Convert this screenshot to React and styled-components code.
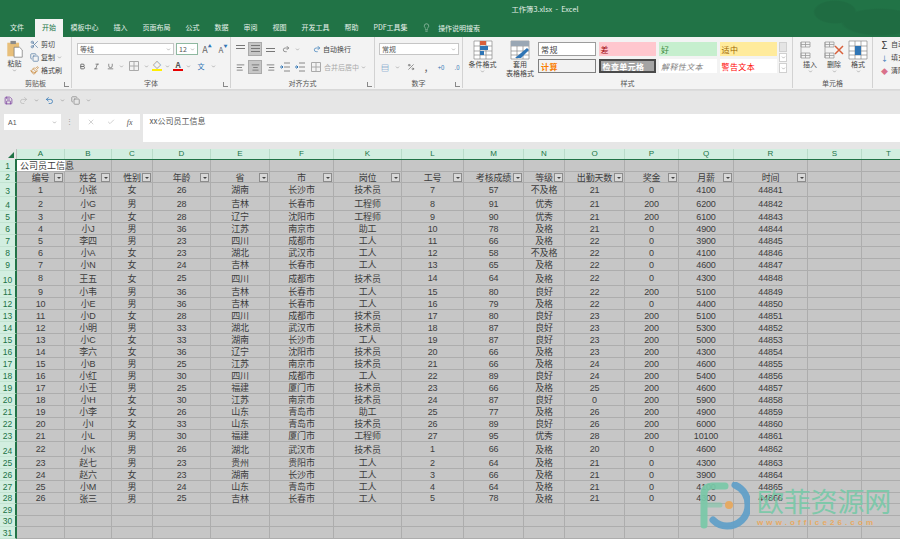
import React from "react";
import styled, { createGlobalStyle } from "styled-components";
import {
  Scissors, Copy, Paintbrush, ChevronDown, Bold, Italic, Underline, Undo2, Redo2, Save,
  Lightbulb, X, Check, AlignLeft, AlignCenter, AlignRight, Percent,
} from "lucide-react";

const COLS = [48, 47, 41, 58, 59, 64, 68, 62, 60, 41, 60, 54, 55, 74, 54, 54];
const COL_NAMES = ["A", "B", "C", "D", "E", "F", "K", "L", "M", "N", "O", "P", "Q", "R", "S", "T"];
const HEADINGS = ["编号", "姓名", "性别", "年龄", "省", "市", "岗位", "工号", "考核成绩", "等级", "出勤天数", "奖金", "月薪", "时间"];
const ROW_HEIGHTS = [12, 11, 14, 14, 12, 12, 12, 12, 12, 15, 12, 12, 12, 12, 12, 12, 12, 12, 12, 12, 12, 12, 12, 15, 12, 12, 12, 11, 12, 11, 12];

const DATA = [
  "1 小张 女 26 湖南 长沙市 技术员 7 57 不及格 21 0 4100 44841",
  "2 小G 男 28 吉林 长春市 工程师 8 91 优秀 21 200 6200 44842",
  "3 小F 女 28 辽宁 沈阳市 工程师 9 90 优秀 21 200 6100 44843",
  "4 小J 男 36 江苏 南京市 助工 10 78 及格 21 0 4900 44844",
  "5 李四 男 23 四川 成都市 工人 11 66 及格 22 0 3900 44845",
  "6 小A 女 23 湖北 武汉市 工人 12 58 不及格 22 0 4100 44846",
  "7 小N 女 24 吉林 长春市 工人 13 65 及格 22 0 4600 44847",
  "8 王五 女 25 四川 成都市 技术员 14 64 及格 22 0 4300 44848",
  "9 小韦 男 36 吉林 长春市 工人 15 80 良好 22 200 5100 44849",
  "10 小E 男 36 吉林 长春市 工人 16 79 及格 22 0 4400 44850",
  "11 小D 女 28 四川 成都市 技术员 17 80 良好 23 200 5100 44851",
  "12 小明 男 33 湖北 武汉市 技术员 18 87 良好 23 200 5300 44852",
  "13 小C 女 33 湖南 长沙市 工人 19 87 良好 23 200 5000 44853",
  "14 李六 女 36 辽宁 沈阳市 技术员 20 66 及格 23 200 4300 44854",
  "15 小B 男 25 江苏 南京市 技术员 21 66 及格 24 200 4600 44855",
  "16 小红 男 30 四川 成都市 工人 22 89 良好 24 200 5400 44856",
  "17 小王 男 25 福建 厦门市 技术员 23 66 及格 25 200 4600 44857",
  "18 小H 女 30 江苏 南京市 技术员 24 87 良好 0 200 5900 44858",
  "19 小李 女 26 山东 青岛市 助工 25 77 及格 26 200 4900 44859",
  "20 小I 女 33 山东 青岛市 技术员 26 89 良好 26 200 6000 44860",
  "21 小L 男 30 福建 厦门市 工程师 27 95 优秀 28 200 10100 44861",
  "22 小K 男 26 湖北 武汉市 技术员 1 66 及格 20 0 4600 44862",
  "23 赵七 男 23 贵州 贵阳市 工人 2 64 及格 21 0 4300 44863",
  "24 赵六 女 23 湖南 长沙市 工人 3 66 及格 21 0 3900 44864",
  "25 小M 男 24 山东 青岛市 工人 4 64 及格 21 0 4100 44865",
  "26 张三 男 25 吉林 长春市 工人 5 78 及格 21 0 4300 44866",
].map((line) => line.split(" "));

const TABS = ["文件", "开始", "模板中心", "插入", "页面布局", "公式", "数据", "审阅", "视图", "开发工具", "帮助", "PDF工具集"];

const GlobalStyle = createGlobalStyle`
  html, body {
    margin: 0;
    padding: 0;
    background: #e6e6e6;
    overflow: hidden;
  }
  * {
    box-sizing: border-box;
  }
  body {
    font-family: "Noto Sans CJK SC", "Liberation Sans", sans-serif;
  }
`;

const Page = styled.div`
  position: relative;
  width: 900px;
  height: 539px;
  overflow: hidden;
  display: flex;
  flex-direction: column;
  color: #444;
`;

const TitleBar = styled.header`
  height: 37px;
  flex: none;
  display: flex;
  flex-direction: column;
  background:
    radial-gradient(ellipse 22px 12px at 835px 12px, #1f6c42 90%, transparent 100%),
    radial-gradient(ellipse 40px 14px at 880px 22px, #1f6c42 90%, transparent 100%),
    #217346;
`;

const TitleText = styled.div`
  height: 19px;
  padding: 5px 0 0 190px;
  text-align: center;
  font-size: 7.3px;
  line-height: 9px;
  color: #e6f1ea;
  white-space: pre;
`;

const TabRow = styled.nav`
  height: 18px;
  padding-left: 2.5px;
  display: flex;
  align-items: stretch;
`;

const Tab = styled.div`
  padding: 0 ${(p) => (p.$active ? "7px" : "7.5px")};
  margin-left: ${(p) => (p.$active ? "3.5px" : "0")};
  font-size: 7px;
  line-height: 17px;
  white-space: nowrap;
  background: ${(p) => (p.$active ? "#f3f3f3" : "transparent")};
  color: ${(p) => (p.$active ? "#217346" : "#e6f1ea")};
`;

const SearchHint = styled.div`
  margin-left: 7px;
  padding-bottom: 1px;
  display: flex;
  align-items: center;
  gap: 7px;
  font-size: 7px;
  color: #e6f1ea;
`;

const Ribbon = styled.section`
  height: 53px;
  flex: none;
  display: flex;
  background: #f3f3f3;
  border-bottom: 1px solid #d8d8d8;
`;

const Group = styled.div`
  width: ${(p) => p.$w}px;
  height: 51px;
  flex: none;
  position: relative;
  border-right: 1px solid #d2d2d2;
  display: flex;
  flex-direction: column;
`;

const GroupBody = styled.div`
  height: 41px;
  display: flex;
  padding-left: ${(p) => p.$left ?? 0}px;
  overflow: hidden;
`;

const GroupLabel = styled.div`
  height: 10px;
  font-size: 7px;
  line-height: 10px;
  text-align: center;
  color: #555;
`;

const Launcher = styled.span`
  position: absolute;
  right: 2px;
  bottom: 1px;
  width: 5px;
  height: 5px;
  border-left: 1px solid #888;
  border-bottom: 1px solid #888;
`;

const Column = styled.div`
  display: flex;
  flex-direction: column;
  gap: ${(p) => p.$gap ?? 0}px;
  padding: ${(p) => p.$pad ?? "0"};
`;

const Row = styled.div`
  display: flex;
  align-items: center;
  gap: ${(p) => p.$gap ?? 0}px;
  padding: ${(p) => p.$pad ?? "0"};
`;

const SmallText = styled.span`
  font-size: 7px;
  line-height: 9px;
  white-space: nowrap;
  color: ${(p) => (p.$muted ? "#aaa" : "#444")};
`;

const BigButton = styled.div`
  width: ${(p) => p.$w}px;
  flex: none;
  display: flex;
  flex-direction: column;
  align-items: center;
  padding-top: ${(p) => p.$top ?? 3}px;
  font-size: 7px;
  line-height: 9px;
  text-align: center;
  color: #444;
`;

const Caret = styled(ChevronDown).attrs({ size: 5, strokeWidth: 2 })`
  color: #666;
  flex: none;
`;

const ComboBox = styled.div`
  width: ${(p) => p.$w}px;
  height: ${(p) => p.$h ?? 12}px;
  display: flex;
  align-items: center;
  justify-content: space-between;
  padding: 0 2px;
  font-size: 7px;
  background: #fff;
  border: 1px solid ${(p) => (p.$active ? "#8fb8a0" : "#c6c6c6")};
  color: #555;
`;

const IconSlot = styled.span`
  width: ${(p) => p.$w ?? 14}px;
  height: ${(p) => p.$h ?? 14}px;
  flex: none;
  display: flex;
  align-items: center;
  justify-content: center;
  color: ${(p) => p.$c ?? "#666"};
  font-size: ${(p) => p.$fs ?? 8}px;
  font-weight: ${(p) => p.$fw ?? 400};
  background: ${(p) => (p.$on ? "#c6c6c6" : "transparent")};
  border: ${(p) => (p.$on ? "1px solid #aaa" : "none")};
`;

const SizeArrow = styled.span`
  font-size: 4px;
  line-height: 4px;
  align-self: flex-start;
  margin-top: 1px;
  color: #2f75b5;
`;

const ColorBar = styled.span`
  position: relative;
  width: 10px;
  display: flex;
  flex-direction: column;
  align-items: center;
  font-size: 8px;
  line-height: 8px;
  font-weight: 700;
  color: #555;
  &::after {
    content: "";
    width: 10px;
    height: 2px;
    background: ${(p) => p.$c};
  }
`;

const StyleGrid = styled.div`
  display: grid;
  grid-template-columns: repeat(4, 57.5px);
  grid-auto-rows: 14px;
  column-gap: 3px;
  row-gap: 3px;
  margin-top: 5px;
`;

const StyleCell = styled.div`
  display: flex;
  align-items: center;
  padding-left: 2px;
  font-size: 8px;
  white-space: nowrap;
  letter-spacing: 0.4px;
  overflow: hidden;
  background: ${(p) => p.$bg ?? "#fff"};
  color: ${(p) => p.$c ?? "#444"};
  border: ${(p) => p.$border ?? "none"};
  font-weight: ${(p) => p.$fw ?? 400};
  font-style: ${(p) => p.$fs ?? "normal"};
`;

const StyleScroller = styled.div`
  width: 8px;
  height: 31px;
  margin: 5px 0 0 2px;
  display: flex;
  flex-direction: column;
  gap: 1px;
  flex: none;
`;

const ScrollPart = styled.span`
  flex: 1;
  background: ${(p) => (p.$dim ? "#e4e4e4" : "#fff")};
  border: 1px solid #d0d0d0;
  display: flex;
  align-items: center;
  justify-content: center;
`;

const QuickBar = styled.div`
  height: 20px;
  flex: none;
  display: flex;
  align-items: center;
  gap: 6px;
  padding: 0 0 1px 4px;
  background: #e6e6e6;
  border-top: 1px solid #dcdcdc;
`;

const FormulaBar = styled.div`
  height: 37px;
  flex: none;
  display: flex;
  padding: 4px 0 0 4px;
  background: #e6e6e6;
`;

const NameBox = styled.div`
  width: 57px;
  height: 16px;
  background: #fff;
  display: flex;
  align-items: center;
  justify-content: space-between;
  padding: 0 4px;
  font-size: 7px;
  font-family: "Liberation Sans", sans-serif;
  color: #555;
`;

const Dots = styled.div`
  width: 18px;
  height: 16px;
  text-align: center;
  font-size: 7px;
  line-height: 15px;
  color: #999;
`;

const FormulaButtons = styled.div`
  width: 62px;
  height: 16px;
  background: #fff;
  display: flex;
  align-items: center;
  justify-content: space-around;
  padding: 0 2px;
  color: #bbb;
`;

const FxMark = styled.span`
  font-family: "Liberation Serif", serif;
  font-style: italic;
  font-size: 8px;
  color: #555;
`;

const FormulaInput = styled.div`
  margin-left: 3px;
  width: 760px;
  height: 28px;
  background: #fff;
  padding: 1px 6px;
  font-size: 8px;
  line-height: 12px;
  color: #555;
`;

const Sheet = styled.div`
  flex: 1;
  min-height: 0;
  overflow: hidden;
  padding-top: 2px;
  background: #e6e6e6;
`;

const SheetRow = styled.div`
  display: flex;
  height: ${(p) => p.$h}px;
  width: 916px;
`;

const Corner = styled.div`
  position: relative;
  width: 17px;
  flex: none;
  background: #e6e6e6;
  border-right: 1px solid #c0c0c0;
  &::after {
    content: "";
    position: absolute;
    right: 2px;
    bottom: 1px;
    border-left: 6px solid transparent;
    border-bottom: 6px solid #217346;
  }
`;

const ColHead = styled.div`
  flex: none;
  background: #d2eee0;
  border-right: 1px solid #b9dcc9;
  font-family: "Liberation Sans", sans-serif;
  font-size: 8px;
  line-height: 10px;
  text-align: center;
  color: #217346;
`;

const SelectionLine = styled.div`
  height: 1px;
  margin-left: 15px;
  background: #217346;
`;

const RowHead = styled.div`
  width: 17px;
  flex: none;
  display: flex;
  align-items: flex-end;
  justify-content: center;
  background: #d2eee0;
  border-right: 2px solid #217346;
  border-bottom: 1px solid #c2e3d1;
  font-family: "Liberation Sans", sans-serif;
  font-size: 8.5px;
  line-height: 10px;
  overflow: hidden;
  color: #217346;
`;

const Cell = styled.div`
  position: relative;
  flex: none;
  display: flex;
  align-items: center;
  justify-content: center;
  background: #c6c6c6;
  border-right: 1px solid #adadad;
  border-bottom: 1px solid #adadad;
  font-family: "Liberation Sans", "Noto Sans CJK SC", sans-serif;
  font-size: 9px;
  letter-spacing: -0.15px;
  white-space: nowrap;
  color: #3d3d3d;
`;

const TitleCell = styled(Cell)`
  background: #fff;
  justify-content: flex-start;
  overflow: visible;
  z-index: 1;
  padding-left: 3px;
  border-right: none;
  letter-spacing: 0;
`;

const FilterButton = styled.span`
  position: absolute;
  right: 1px;
  top: 1px;
  width: 9px;
  height: 9px;
  background: #d8d8d8;
  border: 1px solid #8c8c8c;
  &::after {
    content: "";
    position: absolute;
    left: 1.5px;
    top: 2.5px;
    border-left: 2px solid transparent;
    border-right: 2px solid transparent;
    border-top: 2px solid #444;
  }
`;

const Watermark = styled.div`
  position: absolute;
  left: 700px;
  top: 482px;
  display: flex;
  gap: 7px;
  opacity: 0.92;
  pointer-events: none;
`;

const WatermarkName = styled.div`
  font-size: 27px;
  line-height: 30px;
  margin-top: 4px;
  color: #79c9a8;
  white-space: nowrap;
  letter-spacing: -0.2px;
`;

const WatermarkUrl = styled.div`
  font-family: "Liberation Sans", sans-serif;
  font-weight: 700;
  font-size: 8px;
  line-height: 10px;
  margin-top: 2px;
  letter-spacing: 3.1px;
  color: #eba85c;
  white-space: nowrap;
`;

const PasteIcon = () => (
  <svg width="18" height="19" viewBox="0 0 18 21">
    <rect x="0.5" y="3" width="13" height="15" fill="#e8bf7a" />
    <rect x="4" y="1" width="6" height="3.5" fill="#8a8a8a" />
    <path d="M8 8h6l3 3v8H8z" fill="#fff" stroke="#777" strokeWidth="0.8" />
  </svg>
);

const SheetIcon = ({ children, w = 20, h = 20 }) => (
  <svg width={w} height={h} viewBox="0 0 20 20">
    <path d="M1 1h18v18H1zM1 6h18M1 11h18M1 15h18M7 1v18M13 1v18" fill="#fff" stroke="#8a8a8a" strokeWidth="0.7" />
    {children}
  </svg>
);

const CellBlocks = ({ children }) => (
  <svg width="20" height="20" viewBox="0 0 20 20">
    <path d="M1 2h9v5H1zM1 13h9v5H1zM1 2v16M5.500 2v5M5.500 13v5M1 15.500h9M1 4.500h9" fill="none" stroke="#999" strokeWidth="0.8" />
    {children}
  </svg>
);

const GridIcon = () => (
  <svg width="12" height="12" viewBox="0 0 12 12">
    <path d="M1.500 1.500h9v9h-9zM6 1.500v9M1.500 6h9" fill="#f3f3f3" stroke="#aaa" />
  </svg>
);

const LinesIcon = ({ widths, on }) => (
  <IconSlot $w={14} $h={14} $on={on}>
    <svg width="9" height="9" viewBox="0 0 9 9">
      {widths.map((w, i) => (
        <rect key={i} x={(9 - w) / 2} y={i * 3} width={w} height="1" fill="#777" />
      ))}
    </svg>
  </IconSlot>
);

const IndentIcon = () => (
  <svg width="10" height="10" viewBox="0 0 10 10">
    <path d="M4 1h6M4 5h6M4 9h6" stroke="#888" />
    <path d="M0 5h3M1.500 3.500 3 5 1.500 6.500" stroke="#2f75b5" fill="none" />
  </svg>
);

const LogoMark = () => (
  <svg width="50" height="48" viewBox="0 0 50 48">
    <path d="M4 43V12C4 6 8 4 12 4H25" fill="none" stroke="#79c9a8" strokeWidth="7" strokeLinecap="round" />
    <path d="M5 23H20" stroke="#79c9a8" strokeWidth="5" strokeLinecap="round" opacity="0.6" />
    <path d="M35 3C44 7 48 15 48 23C48 36 38 44 27 44C22 44 17 42 13 38" fill="none" stroke="#5f9fc9" strokeWidth="7" strokeLinecap="round" />
    <circle cx="29" cy="23" r="4" fill="#e8a85c" />
  </svg>
);

const App = () => {
  return (
    <Page>
      <GlobalStyle />
      <TitleBar>
        <TitleText>工作簿3.xlsx  -  Excel</TitleText>
        <TabRow>
          {TABS.map((tab) => (
            <Tab key={tab} $active={tab === "开始"}>{tab}</Tab>
          ))}
          <SearchHint>
            <Lightbulb size={9} strokeWidth={1.2} />
            操作说明搜索
          </SearchHint>
        </TabRow>
      </TitleBar>

      <Ribbon>
        <Group $w={72}>
          <GroupBody>
            <BigButton $w={29} $top={3}>
              <PasteIcon />
              粘贴
              <Caret />
            </BigButton>
            <Column $gap={4} $pad="3px 0 0 1px">
              <Row $gap={2}><Scissors size={9} color="#5a7fa5" /><SmallText>剪切</SmallText></Row>
              <Row $gap={2}><Copy size={9} color="#5a7fa5" /><SmallText>复制</SmallText><Caret /></Row>
              <Row $gap={2}><Paintbrush size={9} color="#c98a3c" /><SmallText>格式刷</SmallText></Row>
            </Column>
          </GroupBody>
          <GroupLabel>剪贴板</GroupLabel>
          <Launcher />
        </Group>

        <Group $w={159}>
          <GroupBody>
            <Column $gap={4} $pad="6px 0 0 5px">
              <Row $gap={2}>
                <ComboBox $w={97}>等线<Caret /></ComboBox>
                <ComboBox $w={22} $active>12<Caret /></ComboBox>
                <IconSlot $w={14} $h={12} $fs={9}>A<SizeArrow>▲</SizeArrow></IconSlot>
                <IconSlot $w={14} $h={12} $fs={8}>A<SizeArrow>▼</SizeArrow></IconSlot>
              </Row>
              <Row $gap={3}>
                <IconSlot $w={11} $h={14}><Bold size={7} strokeWidth={3} /></IconSlot>
                <IconSlot $w={11} $h={14}><Italic size={7} strokeWidth={2.5} /></IconSlot>
                <IconSlot $w={11} $h={14}><Underline size={7} strokeWidth={2.5} /></IconSlot>
                <Caret />
                <IconSlot $w={14} $h={14}><GridIcon /></IconSlot>
                <Caret />
                <ColorBar $c="#ffee00">◇</ColorBar>
                <Caret />
                <ColorBar $c="#e80000">A</ColorBar>
                <Caret />
                <IconSlot $w={14} $h={14} $c="#2f75b5" $fs={7}>文</IconSlot>
                <Caret />
              </Row>
            </Column>
          </GroupBody>
          <GroupLabel>字体</GroupLabel>
          <Launcher />
        </Group>

        <Group $w={144}>
          <GroupBody>
            <Column $gap={4} $pad="5px 0 0 2px">
              <Row $gap={1}>
                <LinesIcon widths={[9, 9, 0]} />
                <LinesIcon widths={[9, 9, 9]} on />
                <LinesIcon widths={[0, 9, 9]} />
                <IconSlot $w={16} $h={14}><Redo2 size={8} /></IconSlot>
                <Caret />
                <Row $gap={2} $pad="0 0 0 12px"><Redo2 size={8} color="#2f75b5" /><SmallText>自动换行</SmallText></Row>
              </Row>
              <Row $gap={1}>
                <IconSlot $w={14} $h={14}><AlignLeft size={9} /></IconSlot>
                <IconSlot $w={14} $h={14} $on><AlignCenter size={9} /></IconSlot>
                <IconSlot $w={14} $h={14}><AlignRight size={9} /></IconSlot>
                <IconSlot $w={14} $h={14}><IndentIcon /></IconSlot>
                <IconSlot $w={14} $h={14}><IndentIcon /></IconSlot>
                <Row $gap={2} $pad="0 0 0 2px"><GridIcon /><SmallText $muted>合并后居中</SmallText><Caret /></Row>
              </Row>
            </Column>
          </GroupBody>
          <GroupLabel>对齐方式</GroupLabel>
          <Launcher />
        </Group>

        <Group $w={88}>
          <GroupBody>
            <Column $gap={6} $pad="6px 0 0 4px">
              <ComboBox $w={80}>常规<Caret /></ComboBox>
              <Row $gap={4}>
                <IconSlot $w={12} $h={12} $c="#2f75b5">▤</IconSlot>
                <Caret />
                <IconSlot $w={13} $h={12}><Percent size={8} /></IconSlot>
                <IconSlot $w={10} $h={12} $fw={700}>,</IconSlot>
                <IconSlot $w={12} $h={12} $fs={6} $c="#2f75b5">+0</IconSlot>
                <IconSlot $w={12} $h={12} $fs={6} $c="#2f75b5">.0</IconSlot>
              </Row>
            </Column>
          </GroupBody>
          <GroupLabel>数字</GroupLabel>
          <Launcher />
        </Group>

        <Group $w={330}>
          <GroupBody>
            <BigButton $w={39} $top={3}>
              <SheetIcon>
                <rect x="7" y="1" width="6" height="4" fill="#d9603b" />
                <rect x="7" y="6" width="8" height="4" fill="#2f75b5" />
                <rect x="7" y="11" width="4" height="4" fill="#2f75b5" />
              </SheetIcon>
              条件格式
              <Caret />
            </BigButton>
            <BigButton $w={36} $top={3}>
              <SheetIcon>
                <rect x="1" y="1" width="18" height="5" fill="#9aa7b4" />
                <path d="M5 18 17 8l2 2-8 8z" fill="#2f75b5" />
              </SheetIcon>
              套用
              <br />
              表格格式
            </BigButton>
            <StyleGrid>
              <StyleCell $border="1px solid #9c9c9c">常规</StyleCell>
              <StyleCell $bg="#ffc7ce" $c="#9c0006">差</StyleCell>
              <StyleCell $bg="#c6efce" $c="#3c8a3c">好</StyleCell>
              <StyleCell $bg="#ffeb9c" $c="#9c6500">适中</StyleCell>
              <StyleCell $bg="#f2f2f2" $c="#fa7d00" $fw={700} $border="1px solid #7f7f7f">计算</StyleCell>
              <StyleCell $bg="#a5a5a5" $c="#fff" $fw={700} $border="2px solid #4a4a4a">检查单元格</StyleCell>
              <StyleCell $c="#7f7f7f" $fs="italic">解释性文本</StyleCell>
              <StyleCell $c="#ff0000">警告文本</StyleCell>
            </StyleGrid>
            <StyleScroller>
              <ScrollPart $dim />
              <ScrollPart><Caret /></ScrollPart>
              <ScrollPart><Caret /></ScrollPart>
            </StyleScroller>
          </GroupBody>
          <GroupLabel>样式</GroupLabel>
        </Group>

        <Group $w={80}>
          <GroupBody $left={5}>
            <BigButton $w={24} $top={3}>
              <CellBlocks />
              插入
              <Caret />
            </BigButton>
            <BigButton $w={24} $top={3}>
              <CellBlocks>
                <path d="M11 6 19 14M19 6 11 14" stroke="#d9603b" strokeWidth="1.5" />
              </CellBlocks>
              删除
              <Caret />
            </BigButton>
            <BigButton $w={24} $top={3}>
              <SheetIcon>
                <rect x="7" y="6" width="6" height="9" fill="#2f75b5" />
              </SheetIcon>
              格式
              <Caret />
            </BigButton>
          </GroupBody>
          <GroupLabel>单元格</GroupLabel>
        </Group>

        <Column $gap={4} $pad="3px 0 0 7px">
          <Row $gap={2}><IconSlot $w={9} $h={9} $fs={10} $c="#333">Σ</IconSlot><SmallText>自动</SmallText></Row>
          <Row $gap={2}><IconSlot $w={9} $h={9} $c="#2f75b5" $fs={7}>↓</IconSlot><SmallText>填充</SmallText></Row>
          <Row $gap={2}><IconSlot $w={9} $h={9} $c="#d9708a" $fs={7}>◆</IconSlot><SmallText>清除</SmallText></Row>
        </Column>
      </Ribbon>

      <QuickBar>
        <Save size={9} color="#7a3e9d" />
        <Redo2 size={9} color="#b8b8b8" />
        <Caret />
        <Undo2 size={9} color="#2f75b5" />
        <Caret />
        <Copy size={9} color="#888" />
        <Caret />
      </QuickBar>

      <FormulaBar>
        <NameBox>A1<Caret /></NameBox>
        <Dots>⋮</Dots>
        <FormulaButtons>
          <X size={8} />
          <Check size={8} />
          <FxMark>fx</FxMark>
        </FormulaButtons>
        <FormulaInput>xx公司员工信息</FormulaInput>
      </FormulaBar>

      <Sheet>
        <SheetRow $h={10}>
          <Corner />
          {COL_NAMES.map((name, i) => (
            <ColHead key={name} style={{ width: COLS[i] }}>{name}</ColHead>
          ))}
        </SheetRow>
        <SelectionLine />
        {ROW_HEIGHTS.map((h, r) => {
          const record = r >= 2 ? DATA[r - 2] : null;
          return (
            <SheetRow key={r} $h={h}>
              <RowHead>{r + 1}</RowHead>
              {COLS.map((w, c) => {
                if (r === 0 && c === 0) {
                  return <TitleCell key={c} style={{ width: w }}>公司员工信息</TitleCell>;
                }
                if (r === 1 && c < HEADINGS.length) {
                  return (
                    <Cell key={c} style={{ width: w }}>
                      {HEADINGS[c]}
                      <FilterButton />
                    </Cell>
                  );
                }
                return <Cell key={c} style={{ width: w }}>{record ? record[c] : ""}</Cell>;
              })}
            </SheetRow>
          );
        })}
      </Sheet>

      <Watermark>
        <LogoMark />
        <div>
          <WatermarkName>欧菲资源网</WatermarkName>
          <WatermarkUrl>www.office26.com</WatermarkUrl>
        </div>
      </Watermark>
    </Page>
  );
};

export default App;
